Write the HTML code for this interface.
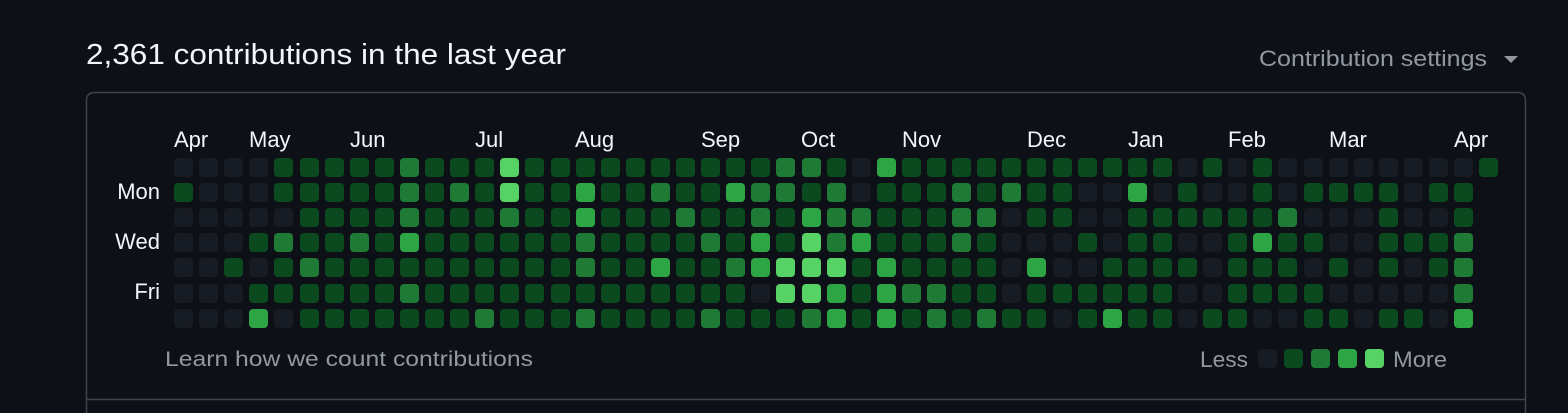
<!DOCTYPE html>
<html><head><meta charset="utf-8"><style>
html,body{margin:0;padding:0;background:#0d1117;width:1568px;height:413px;overflow:hidden}
svg{display:block}
text{font-family:"Liberation Sans",Arial,sans-serif}
rect.c{width:19px;height:19px;rx:4px;ry:4px}
.l0{fill:#171c24}.l1{fill:#0b4a1e}.l2{fill:#1f7a36}.l3{fill:#2ea545}.l4{fill:#56d364}
</style></head><body>
<svg width="1568" height="413" viewBox="0 0 1568 413">
<text x="86" y="64" font-size="29" fill="#f0f6fc" textLength="480" lengthAdjust="spacingAndGlyphs">2,361 contributions in the last year</text>
<text x="1259" y="66" font-size="22" fill="#9198a1" textLength="228" lengthAdjust="spacingAndGlyphs">Contribution settings</text>
<path d="M1504 56 L1518 56 L1511 63 Z" fill="#9198a1"/>
<path d="M86.5 413 L86.5 100.5 Q86.5 92.5 94.5 92.5 L1517.5 92.5 Q1525.5 92.5 1525.5 100.5 L1525.5 413" fill="none" stroke="#3d444d" stroke-width="1.5"/>
<line x1="87" y1="399.5" x2="1525" y2="399.5" stroke="#3d444d" stroke-width="1.5"/>
<g font-size="22" fill="#f0f6fc">
<text x="174" y="147">Apr</text><text x="249" y="147">May</text><text x="350" y="147">Jun</text><text x="475" y="147">Jul</text><text x="575" y="147">Aug</text><text x="701" y="147">Sep</text><text x="801" y="147">Oct</text><text x="902" y="147">Nov</text><text x="1027" y="147">Dec</text><text x="1128" y="147">Jan</text><text x="1228" y="147">Feb</text><text x="1329" y="147">Mar</text><text x="1454" y="147">Apr</text>
<text x="160" y="199" text-anchor="end">Mon</text><text x="160" y="249" text-anchor="end">Wed</text><text x="160" y="299" text-anchor="end">Fri</text>
</g>
<text x="165" y="366" font-size="21" fill="#9198a1" textLength="368" lengthAdjust="spacingAndGlyphs">Learn how we count contributions</text>
<text x="1200" y="367" font-size="22" fill="#9198a1" textLength="48" lengthAdjust="spacingAndGlyphs">Less</text>
<text x="1393" y="367" font-size="22" fill="#9198a1" textLength="54" lengthAdjust="spacingAndGlyphs">More</text>
<rect class="c l0" x="1258" y="349"/><rect class="c l1" x="1284" y="349"/><rect class="c l2" x="1311" y="349"/><rect class="c l3" x="1338" y="349"/><rect class="c l4" x="1365" y="349"/>
<g>
<g transform="translate(174)"><rect class="c l0" y="158"/><rect class="c l1" y="183"/><rect class="c l0" y="208"/><rect class="c l0" y="233"/><rect class="c l0" y="258"/><rect class="c l0" y="284"/><rect class="c l0" y="309"/></g>
<g transform="translate(199)"><rect class="c l0" y="158"/><rect class="c l0" y="183"/><rect class="c l0" y="208"/><rect class="c l0" y="233"/><rect class="c l0" y="258"/><rect class="c l0" y="284"/><rect class="c l0" y="309"/></g>
<g transform="translate(224)"><rect class="c l0" y="158"/><rect class="c l0" y="183"/><rect class="c l0" y="208"/><rect class="c l0" y="233"/><rect class="c l1" y="258"/><rect class="c l0" y="284"/><rect class="c l0" y="309"/></g>
<g transform="translate(249)"><rect class="c l0" y="158"/><rect class="c l0" y="183"/><rect class="c l0" y="208"/><rect class="c l1" y="233"/><rect class="c l0" y="258"/><rect class="c l1" y="284"/><rect class="c l3" y="309"/></g>
<g transform="translate(274)"><rect class="c l1" y="158"/><rect class="c l1" y="183"/><rect class="c l0" y="208"/><rect class="c l2" y="233"/><rect class="c l1" y="258"/><rect class="c l1" y="284"/><rect class="c l0" y="309"/></g>
<g transform="translate(300)"><rect class="c l1" y="158"/><rect class="c l1" y="183"/><rect class="c l1" y="208"/><rect class="c l1" y="233"/><rect class="c l2" y="258"/><rect class="c l1" y="284"/><rect class="c l1" y="309"/></g>
<g transform="translate(325)"><rect class="c l1" y="158"/><rect class="c l1" y="183"/><rect class="c l1" y="208"/><rect class="c l1" y="233"/><rect class="c l1" y="258"/><rect class="c l1" y="284"/><rect class="c l1" y="309"/></g>
<g transform="translate(350)"><rect class="c l1" y="158"/><rect class="c l1" y="183"/><rect class="c l1" y="208"/><rect class="c l2" y="233"/><rect class="c l1" y="258"/><rect class="c l1" y="284"/><rect class="c l1" y="309"/></g>
<g transform="translate(375)"><rect class="c l1" y="158"/><rect class="c l1" y="183"/><rect class="c l1" y="208"/><rect class="c l1" y="233"/><rect class="c l1" y="258"/><rect class="c l1" y="284"/><rect class="c l1" y="309"/></g>
<g transform="translate(400)"><rect class="c l2" y="158"/><rect class="c l2" y="183"/><rect class="c l2" y="208"/><rect class="c l3" y="233"/><rect class="c l1" y="258"/><rect class="c l2" y="284"/><rect class="c l1" y="309"/></g>
<g transform="translate(425)"><rect class="c l1" y="158"/><rect class="c l1" y="183"/><rect class="c l1" y="208"/><rect class="c l1" y="233"/><rect class="c l1" y="258"/><rect class="c l1" y="284"/><rect class="c l1" y="309"/></g>
<g transform="translate(450)"><rect class="c l1" y="158"/><rect class="c l2" y="183"/><rect class="c l1" y="208"/><rect class="c l1" y="233"/><rect class="c l1" y="258"/><rect class="c l1" y="284"/><rect class="c l1" y="309"/></g>
<g transform="translate(475)"><rect class="c l1" y="158"/><rect class="c l1" y="183"/><rect class="c l1" y="208"/><rect class="c l1" y="233"/><rect class="c l1" y="258"/><rect class="c l1" y="284"/><rect class="c l2" y="309"/></g>
<g transform="translate(500)"><rect class="c l4" y="158"/><rect class="c l4" y="183"/><rect class="c l2" y="208"/><rect class="c l1" y="233"/><rect class="c l1" y="258"/><rect class="c l1" y="284"/><rect class="c l1" y="309"/></g>
<g transform="translate(525)"><rect class="c l1" y="158"/><rect class="c l1" y="183"/><rect class="c l1" y="208"/><rect class="c l1" y="233"/><rect class="c l1" y="258"/><rect class="c l1" y="284"/><rect class="c l1" y="309"/></g>
<g transform="translate(551)"><rect class="c l1" y="158"/><rect class="c l1" y="183"/><rect class="c l1" y="208"/><rect class="c l1" y="233"/><rect class="c l1" y="258"/><rect class="c l1" y="284"/><rect class="c l1" y="309"/></g>
<g transform="translate(576)"><rect class="c l1" y="158"/><rect class="c l3" y="183"/><rect class="c l3" y="208"/><rect class="c l2" y="233"/><rect class="c l2" y="258"/><rect class="c l1" y="284"/><rect class="c l2" y="309"/></g>
<g transform="translate(601)"><rect class="c l1" y="158"/><rect class="c l1" y="183"/><rect class="c l1" y="208"/><rect class="c l1" y="233"/><rect class="c l1" y="258"/><rect class="c l1" y="284"/><rect class="c l1" y="309"/></g>
<g transform="translate(626)"><rect class="c l1" y="158"/><rect class="c l1" y="183"/><rect class="c l1" y="208"/><rect class="c l1" y="233"/><rect class="c l1" y="258"/><rect class="c l1" y="284"/><rect class="c l1" y="309"/></g>
<g transform="translate(651)"><rect class="c l1" y="158"/><rect class="c l2" y="183"/><rect class="c l1" y="208"/><rect class="c l1" y="233"/><rect class="c l3" y="258"/><rect class="c l1" y="284"/><rect class="c l1" y="309"/></g>
<g transform="translate(676)"><rect class="c l1" y="158"/><rect class="c l1" y="183"/><rect class="c l2" y="208"/><rect class="c l1" y="233"/><rect class="c l1" y="258"/><rect class="c l1" y="284"/><rect class="c l1" y="309"/></g>
<g transform="translate(701)"><rect class="c l1" y="158"/><rect class="c l1" y="183"/><rect class="c l1" y="208"/><rect class="c l2" y="233"/><rect class="c l1" y="258"/><rect class="c l1" y="284"/><rect class="c l2" y="309"/></g>
<g transform="translate(726)"><rect class="c l1" y="158"/><rect class="c l3" y="183"/><rect class="c l1" y="208"/><rect class="c l1" y="233"/><rect class="c l2" y="258"/><rect class="c l1" y="284"/><rect class="c l1" y="309"/></g>
<g transform="translate(751)"><rect class="c l1" y="158"/><rect class="c l2" y="183"/><rect class="c l2" y="208"/><rect class="c l3" y="233"/><rect class="c l3" y="258"/><rect class="c l0" y="284"/><rect class="c l1" y="309"/></g>
<g transform="translate(776)"><rect class="c l2" y="158"/><rect class="c l2" y="183"/><rect class="c l1" y="208"/><rect class="c l1" y="233"/><rect class="c l4" y="258"/><rect class="c l4" y="284"/><rect class="c l1" y="309"/></g>
<g transform="translate(802)"><rect class="c l2" y="158"/><rect class="c l1" y="183"/><rect class="c l3" y="208"/><rect class="c l4" y="233"/><rect class="c l4" y="258"/><rect class="c l4" y="284"/><rect class="c l2" y="309"/></g>
<g transform="translate(827)"><rect class="c l1" y="158"/><rect class="c l2" y="183"/><rect class="c l2" y="208"/><rect class="c l2" y="233"/><rect class="c l4" y="258"/><rect class="c l3" y="284"/><rect class="c l3" y="309"/></g>
<g transform="translate(852)"><rect class="c l0" y="158"/><rect class="c l0" y="183"/><rect class="c l2" y="208"/><rect class="c l3" y="233"/><rect class="c l1" y="258"/><rect class="c l1" y="284"/><rect class="c l1" y="309"/></g>
<g transform="translate(877)"><rect class="c l3" y="158"/><rect class="c l1" y="183"/><rect class="c l1" y="208"/><rect class="c l1" y="233"/><rect class="c l3" y="258"/><rect class="c l3" y="284"/><rect class="c l3" y="309"/></g>
<g transform="translate(902)"><rect class="c l1" y="158"/><rect class="c l1" y="183"/><rect class="c l1" y="208"/><rect class="c l1" y="233"/><rect class="c l1" y="258"/><rect class="c l2" y="284"/><rect class="c l1" y="309"/></g>
<g transform="translate(927)"><rect class="c l1" y="158"/><rect class="c l1" y="183"/><rect class="c l1" y="208"/><rect class="c l1" y="233"/><rect class="c l1" y="258"/><rect class="c l2" y="284"/><rect class="c l2" y="309"/></g>
<g transform="translate(952)"><rect class="c l1" y="158"/><rect class="c l2" y="183"/><rect class="c l2" y="208"/><rect class="c l2" y="233"/><rect class="c l1" y="258"/><rect class="c l1" y="284"/><rect class="c l1" y="309"/></g>
<g transform="translate(977)"><rect class="c l1" y="158"/><rect class="c l1" y="183"/><rect class="c l2" y="208"/><rect class="c l1" y="233"/><rect class="c l1" y="258"/><rect class="c l1" y="284"/><rect class="c l2" y="309"/></g>
<g transform="translate(1002)"><rect class="c l1" y="158"/><rect class="c l2" y="183"/><rect class="c l0" y="208"/><rect class="c l0" y="233"/><rect class="c l0" y="258"/><rect class="c l0" y="284"/><rect class="c l1" y="309"/></g>
<g transform="translate(1027)"><rect class="c l1" y="158"/><rect class="c l1" y="183"/><rect class="c l1" y="208"/><rect class="c l0" y="233"/><rect class="c l3" y="258"/><rect class="c l1" y="284"/><rect class="c l1" y="309"/></g>
<g transform="translate(1053)"><rect class="c l1" y="158"/><rect class="c l1" y="183"/><rect class="c l1" y="208"/><rect class="c l0" y="233"/><rect class="c l0" y="258"/><rect class="c l1" y="284"/><rect class="c l0" y="309"/></g>
<g transform="translate(1078)"><rect class="c l1" y="158"/><rect class="c l0" y="183"/><rect class="c l0" y="208"/><rect class="c l1" y="233"/><rect class="c l0" y="258"/><rect class="c l1" y="284"/><rect class="c l1" y="309"/></g>
<g transform="translate(1103)"><rect class="c l1" y="158"/><rect class="c l0" y="183"/><rect class="c l0" y="208"/><rect class="c l0" y="233"/><rect class="c l1" y="258"/><rect class="c l1" y="284"/><rect class="c l3" y="309"/></g>
<g transform="translate(1128)"><rect class="c l1" y="158"/><rect class="c l3" y="183"/><rect class="c l1" y="208"/><rect class="c l1" y="233"/><rect class="c l1" y="258"/><rect class="c l1" y="284"/><rect class="c l1" y="309"/></g>
<g transform="translate(1153)"><rect class="c l1" y="158"/><rect class="c l0" y="183"/><rect class="c l1" y="208"/><rect class="c l1" y="233"/><rect class="c l1" y="258"/><rect class="c l1" y="284"/><rect class="c l1" y="309"/></g>
<g transform="translate(1178)"><rect class="c l0" y="158"/><rect class="c l1" y="183"/><rect class="c l1" y="208"/><rect class="c l0" y="233"/><rect class="c l1" y="258"/><rect class="c l0" y="284"/><rect class="c l0" y="309"/></g>
<g transform="translate(1203)"><rect class="c l1" y="158"/><rect class="c l0" y="183"/><rect class="c l1" y="208"/><rect class="c l0" y="233"/><rect class="c l0" y="258"/><rect class="c l0" y="284"/><rect class="c l1" y="309"/></g>
<g transform="translate(1228)"><rect class="c l0" y="158"/><rect class="c l0" y="183"/><rect class="c l1" y="208"/><rect class="c l1" y="233"/><rect class="c l1" y="258"/><rect class="c l1" y="284"/><rect class="c l1" y="309"/></g>
<g transform="translate(1253)"><rect class="c l1" y="158"/><rect class="c l1" y="183"/><rect class="c l1" y="208"/><rect class="c l3" y="233"/><rect class="c l1" y="258"/><rect class="c l1" y="284"/><rect class="c l0" y="309"/></g>
<g transform="translate(1278)"><rect class="c l0" y="158"/><rect class="c l0" y="183"/><rect class="c l2" y="208"/><rect class="c l1" y="233"/><rect class="c l1" y="258"/><rect class="c l1" y="284"/><rect class="c l0" y="309"/></g>
<g transform="translate(1304)"><rect class="c l0" y="158"/><rect class="c l1" y="183"/><rect class="c l0" y="208"/><rect class="c l1" y="233"/><rect class="c l0" y="258"/><rect class="c l1" y="284"/><rect class="c l1" y="309"/></g>
<g transform="translate(1329)"><rect class="c l0" y="158"/><rect class="c l1" y="183"/><rect class="c l0" y="208"/><rect class="c l0" y="233"/><rect class="c l1" y="258"/><rect class="c l0" y="284"/><rect class="c l1" y="309"/></g>
<g transform="translate(1354)"><rect class="c l0" y="158"/><rect class="c l1" y="183"/><rect class="c l0" y="208"/><rect class="c l0" y="233"/><rect class="c l0" y="258"/><rect class="c l0" y="284"/><rect class="c l0" y="309"/></g>
<g transform="translate(1379)"><rect class="c l0" y="158"/><rect class="c l1" y="183"/><rect class="c l1" y="208"/><rect class="c l1" y="233"/><rect class="c l1" y="258"/><rect class="c l0" y="284"/><rect class="c l1" y="309"/></g>
<g transform="translate(1404)"><rect class="c l0" y="158"/><rect class="c l0" y="183"/><rect class="c l0" y="208"/><rect class="c l1" y="233"/><rect class="c l0" y="258"/><rect class="c l0" y="284"/><rect class="c l1" y="309"/></g>
<g transform="translate(1429)"><rect class="c l0" y="158"/><rect class="c l1" y="183"/><rect class="c l0" y="208"/><rect class="c l1" y="233"/><rect class="c l1" y="258"/><rect class="c l0" y="284"/><rect class="c l0" y="309"/></g>
<g transform="translate(1454)"><rect class="c l0" y="158"/><rect class="c l1" y="183"/><rect class="c l1" y="208"/><rect class="c l2" y="233"/><rect class="c l2" y="258"/><rect class="c l2" y="284"/><rect class="c l3" y="309"/></g>
<g transform="translate(1479)"><rect class="c l1" y="158"/></g>
</g>
</svg>
</body></html>
